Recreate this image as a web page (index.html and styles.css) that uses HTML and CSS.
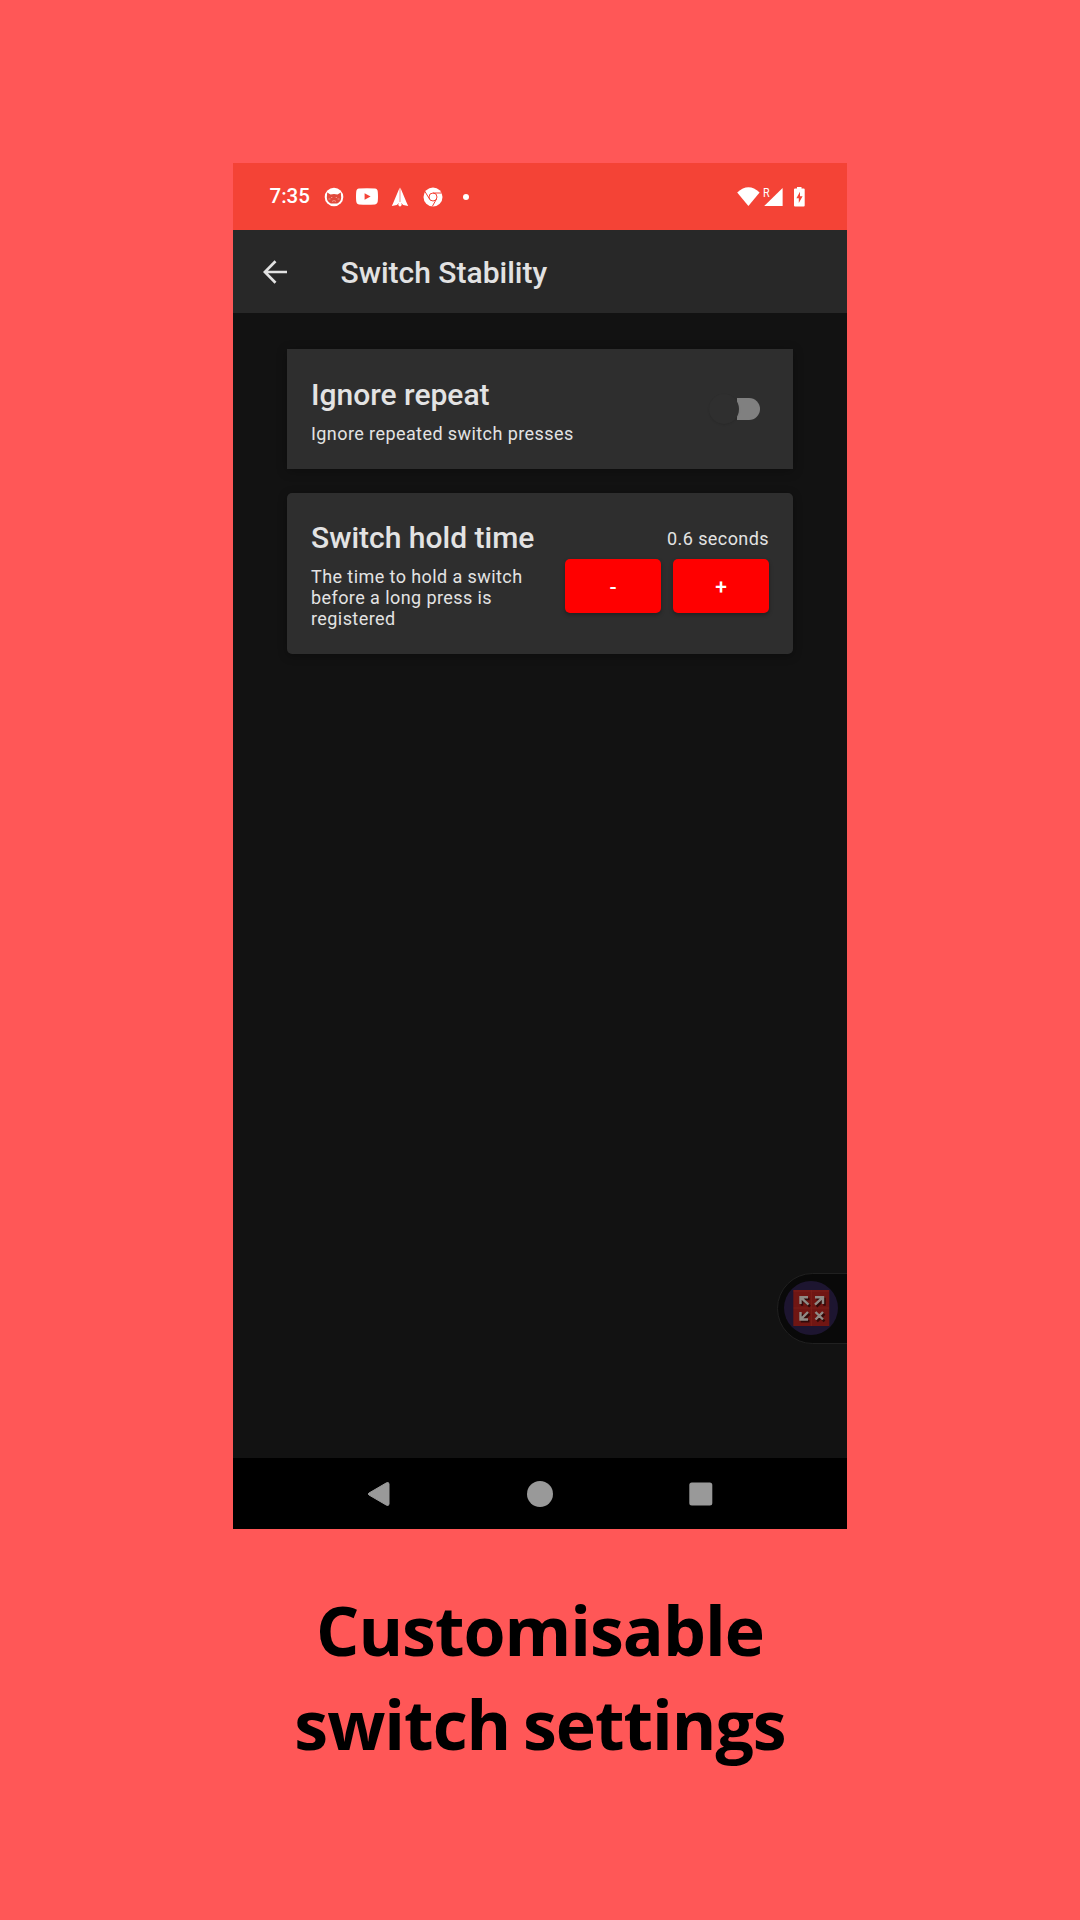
FILE: index.html
```html
<!DOCTYPE html>
<html lang="en">
<head>
<meta charset="utf-8">
<title>Switch Stability</title>
<link rel="stylesheet" href="styles.css">
</head>
<body>
<main class="phone">
  <div class="status">
    <span class="clock">7:35</span>
    <div class="notifications">
      <svg width="20" height="20" viewBox="0 0 20 20"><circle cx="10" cy="10" r="9.3" fill="#fff"/><path d="M3.200 5.600l3.300 1.800q3.500-.8 7 0l3.300-1.800.4 5.200q-.4 4.400-4 5.600H6.800q-3.600-1.200-4-5.600z" fill="#e04a3c"/><path d="M4.500 12h2M13.500 12h2M8 14.500l2-1 2 1M7 10.500h1.300M11.700 10.500H13" fill="none" stroke="#ffb4aa" stroke-width=".7"/></svg>
      <svg width="22" height="17" viewBox="0 0 22 17"><path fill="#fff" fill-rule="evenodd" d="M3 .6Q11-.3 19 .6 21.600.9 21.800 4q.4 4.500 0 9-.2 3-2.800 3.400-8 .8-16 0Q.4 16.100.2 13q-.4-4.500 0-9Q.4.900 3 .6zM8.600 5.200v6.600l6-3.300z"/></svg>
      <svg width="18" height="20" viewBox="0 0 18 20"><path d="M8.700.5v14.700L5.800 18 .8 19l1.500-3.300zM9.300.5l6.400 15.200L17.200 19l-5-1-2.900-2.800z" fill="#fff"/><path d="M8 15h2l.8 3L9 19.700 7.200 18z" fill="#fff"/></svg>
      <svg width="20" height="20" viewBox="0 0 20 20"><circle cx="10" cy="10" r="9.500" fill="#fff"/><circle cx="10" cy="10" r="4" fill="none" stroke="#f44336" stroke-width="1"/><path d="M10 6h8.700M6.500 12L2 4.600M13.500 12L9.300 19.400" fill="none" stroke="#f44336" stroke-width="1"/></svg>
      <span class="dot"></span>
    </div>
    <div class="system">
      <svg width="70" height="22" viewBox="0 0 70 22" fill="#fff"><path d="M.2 6.400Q11.500-4 22.600 6.400L11.400 20z"/><path d="M45.600 2v18H27.200z"/><path d="M57 3.500q0-1 1-1h2V1h4.500v1.500h2.200q1 0 1 1v16q0 1-1 1H58q-1 0-1-1z"/><path d="M63 5.800l-3.600 6.500h2.400v4.800l3.800-6.800h-2.600z" fill="#f44336"/></svg>
      <span class="roaming">R</span>
    </div>
  </div>
  <header class="appbar">
    <svg width="24" height="24" viewBox="0 0 24 24"><path d="M24 12H2M12.500 1.300L1.800 12l10.700 10.700" fill="none" stroke="#e2e2e2" stroke-width="2.700"/></svg>
    <h1>Switch Stability</h1>
  </header>
  <div class="content">
    <section class="card repeat">
      <div><h2>Ignore repeat</h2><p>Ignore repeated switch presses</p></div>
      <div class="toggle"><span class="thumb"></span></div>
    </section>
    <section class="card hold">
      <div><h2>Switch hold time</h2><p>The time to hold a switch<br>before a long press is<br>registered</p></div>
      <div class="controls"><p>0.6 seconds</p><div class="buttons"><button>-</button><button>+</button></div></div>
    </section>
    <div class="floating">
      <svg width="71" height="71" viewBox="0 0 71 71">
        <path d="M71 .5H36.500a35 35 0 0 0 0 70H71" fill="#090909" stroke="#202020"/>
        <circle cx="35" cy="35" r="27" fill="#1d1530"/>
        <path fill="#701613" d="M17.300 17h36v36h-36z"/>
        <path d="M17.500 18H53M35.300 17v36M17.500 35H53" fill="none" stroke="#81221c" stroke-width=".8"/>
        <g fill="none" stroke-width="2.400">
          <path d="M24.500 31v-6.800h7.500M25 24.700l7.500 7M39 24.200h8V31M46.500 24.700l-7.500 7M24.500 39v7.500H32M25 46l7-7M39.500 39l7.500 7.500M47 39L39.500 46.500" stroke="#300908" transform="translate(1.500 1.800)"/>
          <path d="M24.500 31v-6.800h7.500M25 24.700l7.500 7M39 24.200h8V31M46.500 24.700l-7.500 7M24.500 39v7.500H32M25 46l7-7M39.500 39l7.500 7.500M47 39L39.500 46.500" stroke="#8f8a85"/>
        </g>
      </svg>
    </div>
  </div>
  <nav class="navbar">
    <svg width="24" height="26" viewBox="0 0 24 26"><path d="M2 12L19.500 1.800Q22 .9 22 3v20q0 2.100-2.500 1.200L2 14q-1.500-1 0-2z" fill="#999" stroke="#999"/></svg>
    <svg width="26" height="26" viewBox="0 0 26 26"><circle cx="13" cy="13" r="13" fill="#999"/></svg>
    <svg width="24" height="24" viewBox="0 0 24 24"><rect x=".3" y=".4" width="23" height="23.200" rx="2.500" fill="#999"/></svg>
  </nav>
</main>
<p class="caption">Customisable<br>switch settings</p>
</body>
</html>
```
FILE: styles.css
```css
* { box-sizing: border-box; }
body {
  margin: 0;
  height: 1920px;
  padding-top: 163px;
  background: #ff5757;
  font-family: Roboto, sans-serif;
  overflow: hidden;
}
h1, h2, p { margin: 0; }
svg { display: block; flex: none; }
.phone {
  width: 614px;
  height: 1366px;
  margin-left: 233px;
  background: #121212;
  display: flex;
  flex-direction: column;
}
.status {
  height: 67px;
  background: #f44336;
  color: #fff;
  display: flex;
  align-items: center;
  padding: 0 40px 0 36.500px;
}
.clock { font-size: 20.5px; font-weight: 500; width: 54px; letter-spacing: 0; padding-bottom: 1px; }
.notifications { display: flex; align-items: center; width: 146px; }
.notifications svg { margin-right: 12px; }
.notifications svg:nth-child(3) { margin: 0 14px 0 1px; }
.notifications svg:nth-child(4) { margin-right: 20px; }
.dot { width: 6px; height: 6px; flex: none; border-radius: 50%; background: #fff; }
.system { position: relative; margin-left: auto; height: 22px; }
.roaming { position: absolute; left: 26px; top: 0; font-size: 13.5px; line-height: 13px; transform: scaleX(.8); transform-origin: left; }
.appbar {
  height: 83px;
  background: #282828;
  display: flex;
  align-items: center;
  padding: 1px 0 0 30px;
  gap: 53.500px;
}
h1 { font-size: 30px; line-height: 36px; font-weight: 500; color: #e2e2e2; padding-top: 2px; }
.content { flex: 1; padding: 36px 54px 0 54px; display: flex; flex-direction: column; }
.card {
  background: #2e2e2e;
  color: #e3e3e3;
  box-shadow: 0 2px 10px rgba(0, 0, 0, .3);
  display: flex;
  justify-content: space-between;
}
.repeat { height: 120px; padding: 28px 33.500px 0 24px; }
.hold { height: 161px; margin-top: 24px; padding: 27px 24px 0 24px; border-radius: 5px; }
h2 { font-size: 30px; line-height: 36px; font-weight: 500; white-space: nowrap; }
.card p { font-size: 18px; line-height: 21.200px; letter-spacing: .42px; margin-top: 10px; white-space: nowrap; }
.toggle { width: 46px; height: 22px; margin-top: 21px; border-radius: 11px; background: linear-gradient(90deg, transparent 50%, #808080 50%); }
.thumb { display: block; width: 30px; height: 30px; margin: -4px 0 0 -5px; border-radius: 50%; background: #2f2f2f; box-shadow: 0 1px 2px rgba(0, 0, 0, .1); }
.controls { display: flex; flex-direction: column; align-items: flex-end; }
.card .controls p { margin-top: 8px; }
.buttons { display: flex; gap: 12px; margin-top: 9.800px; }
button {
  width: 96px;
  height: 54px;
  border: 0;
  border-radius: 5px;
  background: #f00;
  color: #fff;
  font: 500 21px/54px Roboto, sans-serif;
  padding: 1px 0 0;
  box-shadow: 0 2px 4px rgba(0, 0, 0, .3);
}
.floating { margin: auto -54px 114px 0; align-self: flex-end; }
.navbar {
  height: 71px;
  background: #000;
  display: flex;
  align-items: center;
  justify-content: space-between;
  padding: 0 134px 0 134px;
}
.caption {
  margin-top: 54px;
  text-align: center;
  font: 700 68px/94px "Open Sans", sans-serif;
  letter-spacing: -1px;
  word-spacing: -4px;
  color: #000;
}
```
